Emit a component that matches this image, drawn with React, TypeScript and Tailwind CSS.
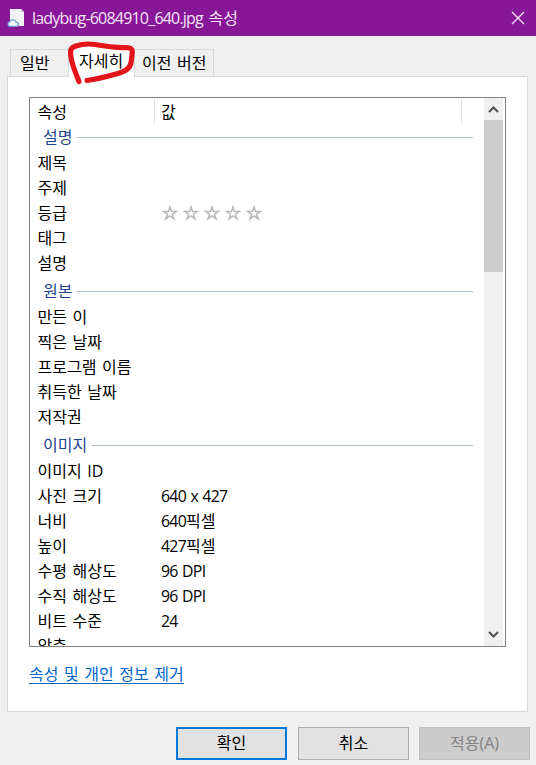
type Row = { name: string; value?: string; unit?: string; stars?: boolean };
type Group = { title: string; rows: Row[] };

const groups: Group[] = [
  {
    title: "설명",
    rows: [{ name: "제목" }, { name: "주제" }, { name: "등급", stars: true }, { name: "태그" }, { name: "설명" }],
  },
  {
    title: "원본",
    rows: [
      { name: "만든 이" },
      { name: "찍은 날짜" },
      { name: "프로그램 이름" },
      { name: "취득한 날짜" },
      { name: "저작권" },
    ],
  },
  {
    title: "이미지",
    rows: [
      { name: "이미지 ID" },
      { name: "사진 크기", value: "640 x 427" },
      { name: "너비", value: "640", unit: "픽셀" },
      { name: "높이", value: "427", unit: "픽셀" },
      { name: "수평 해상도", value: "96 DPI" },
      { name: "수직 해상도", value: "96 DPI" },
      { name: "비트 수준", value: "24" },
      { name: "압축" },
    ],
  },
];

function FileIcon() {
  return (
    <svg width="18" height="20" viewBox="0 0 18 20" className="shrink-0">
      <path d="M3 1h11l3 3v14H3z" fill="#f1f4f6" />
      <path d="M14 1v3h3z" fill="#c3cbd6" />
      <path
        d="M3 18.4a2.4 2.4 0 0 1-.2-4.7 3.5 3.5 0 0 1 6.4 .6 2.1 2.1 0 0 1 .8 4.1z"
        fill="#f4f9fd"
        stroke="#6f9fce"
        strokeWidth="1.2"
      />
    </svg>
  );
}

function Stars() {
  return (
    <div className="flex gap-[5px] pl-[1px]">
      {[0, 1, 2, 3, 4].map((i) => (
        <svg key={i} width="16" height="16" viewBox="0 0 16 16">
          <path
            d="M8 1.8 9.4 6.4H14.6L10.4 9.2 12.1 13.9 8 11 3.9 13.9 5.6 9.2 1.4 6.4H6.6Z"
            fill="#fff"
            stroke="#b9b9b9"
            strokeWidth="1.5"
          />
        </svg>
      ))}
    </div>
  );
}

function PropertyRow({ row }: { row: Row }) {
  return (
    <div className="flex h-[25px] items-center">
      <div className="w-[124px] pl-[7.5px]">{row.name}</div>
      <div className="flex items-center pl-[7px]">
        {row.value && <span className="text-[15.8px] tracking-[-0.7px] [word-spacing:1px]">{row.value}</span>}
        {row.unit}
        {row.stars && <Stars />}
      </div>
    </div>
  );
}

export default function App() {
  return (
    <div className="flex h-[765px] w-[536px] flex-col overflow-hidden bg-[#f0f0f0] font-['Open_Sans','Noto_Sans_CJK_KR',sans-serif] text-base leading-[24px] font-[370] whitespace-nowrap text-black [word-spacing:1.4px]">
      <header className="flex h-9 shrink-0 items-center bg-[#881798] pr-[11px] pl-[7px] text-[#f3e4f5]">
        <FileIcon />
        <h1 className="ml-[7px] flex-1 pb-px">
          <span className="tracking-[-0.8px]">ladybug-6084910_640.jpg</span> 속성
        </h1>
        <svg width="14" height="14" viewBox="0 0 14 14">
          <path d="M1 1 13 13M13 1 1 13" stroke="#f3e4f5" strokeWidth="1.3" />
        </svg>
      </header>

      <nav className="relative z-10 flex h-10 shrink-0 items-end pl-[10px]">
        <div className="flex h-[27px] w-[58px] items-center border border-r-0 border-b-0 border-[#d9d9d9] pl-[9px]">
          일반
        </div>
        <div className="-mb-px flex h-[32px] w-[67px] items-center border border-b-0 border-[#d9d9d9] bg-white pb-[2px] pl-[10px]">
          자세히
        </div>
        <div className="flex h-[27px] w-[79px] items-center border border-b-0 border-l-0 border-[#d9d9d9] pl-[7px]">
          이전 버전
        </div>
        <svg className="absolute top-0 left-[60px]" width="84" height="56" viewBox="60 36 84 56">
          <path
            d="M79 81.500C76 74 72 65 71 57C70 51 70 48 76 46C82 44 88 43.500 95 44.500C106 46.500 115 48 126 47.500C132 47.500 133 50 132 55L131 63C130 69 124 72 116 74C107 76.500 98 79 87 80.500"
            fill="none"
            stroke="#e3151b"
            strokeWidth="5.2"
            strokeLinecap="round"
            strokeLinejoin="round"
          />
        </svg>
      </nav>

      <main className="mr-2 ml-[7px] h-[636px] shrink-0 border border-[#d9d9d9] bg-white pt-5 pl-[21px]">
        <section className="flex h-[550px] w-[477px] border border-[#828282] pr-[2px]">
          <div className="min-w-0 flex-1 overflow-hidden">
            <div className="flex h-[26px] items-center">
              <div className="w-[125px] border-r border-[#e3e3e3] pt-px pl-[7.5px]">속성</div>
              <div className="w-[307px] border-r border-[#e3e3e3] pt-px pl-[6px]">값</div>
            </div>
            {groups.map((group) => (
              <div key={group.title} className="mb-[3px]">
                <div className="flex h-[26px] items-center pr-[11px] pl-[13px] text-[#1d4290]">
                  {group.title}
                  <div className="ml-[5px] h-px flex-1 bg-[#b0bfd0]" />
                </div>
                {group.rows.map((row) => (
                  <PropertyRow key={row.name} row={row} />
                ))}
              </div>
            ))}
          </div>
          <div className="flex w-[19px] flex-col items-center bg-[#f0f0f0]">
            <svg width="19" height="22" viewBox="0 0 19 22" className="shrink-0">
              <path d="M5 14 9.5 9.5 14 14" fill="none" stroke="#505050" strokeWidth="2" />
            </svg>
            <div className="h-[152px] w-full bg-[#cdcdcd]" />
            <svg width="19" height="22" viewBox="0 0 19 22" className="mt-auto shrink-0">
              <path d="M5 8 9.5 12.5 14 8" fill="none" stroke="#505050" strokeWidth="2" />
            </svg>
          </div>
        </section>
        <a className="mt-[15px] inline-block h-[22px] border-b border-[#0066b4] leading-[24px] text-[#0066cc]">
          속성 및 개인 정보 제거
        </a>
      </main>

      <footer className="flex justify-end gap-[11px] pt-[15px] pr-[6px]">
        <button className="h-[33px] w-[111px] border-2 border-[#0078d7] bg-[#e1e1e1] pb-[2px]">확인</button>
        <button className="h-[33px] w-[111px] border border-[#adadad] bg-[#e1e1e1] pb-[2px]">취소</button>
        <button className="-ml-px h-[33px] w-[111px] border border-[#bfbfbf] bg-[#cccccc] pb-px text-[#838383]">
          적용(A)
        </button>
      </footer>
    </div>
  );
}
